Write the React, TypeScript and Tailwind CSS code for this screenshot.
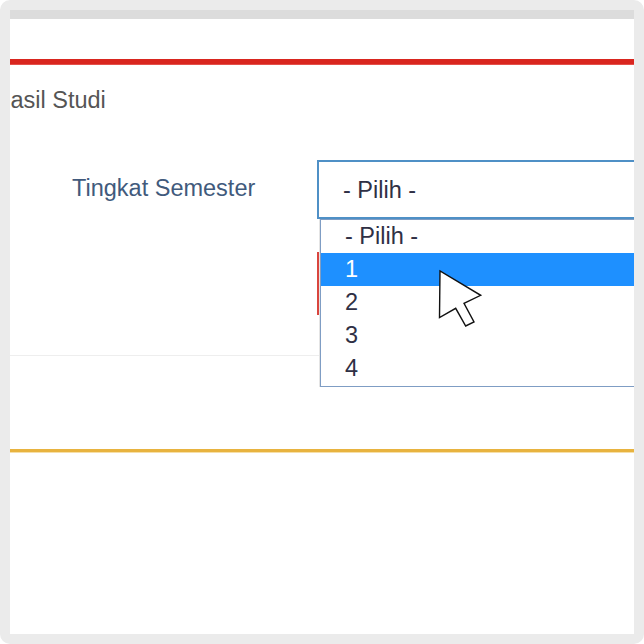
import React from "react";

const options = ["- Pilih -", "1", "2", "3", "4"];

function Cursor() {
  return (
    <svg
      width="48"
      height="62"
      viewBox="-2 -2 48 62"
      className="absolute left-[117px] top-[49px]"
    >
      <polygon
        points="0,0 -0.5,46.5 15.7,37.3 25.7,55 34,51 24,32.3 40.7,24.3"
        fill="#ffffff"
        stroke="#111111"
        strokeWidth="1.4"
        strokeLinejoin="miter"
      />
    </svg>
  );
}

export default function App() {
  return (
    <div className="w-[644px] h-[644px] bg-white font-['Liberation_Sans',Arial,sans-serif]">
      <div className="w-full h-full rounded-[10px] bg-[#ebebeb] p-[10px]">
        <div className="w-full h-full bg-white flex flex-col overflow-hidden">
          {/* top strip */}
          <div className="h-[9px] bg-[#dcdcdc] shrink-0" />
          <div className="h-[40px] shrink-0" />
          <div className="h-[6px] bg-[#d9261f] shrink-0 border-b border-[#e4504a]" />

          {/* title, scrolled so its first letter is cut */}
          <div className="mt-[21px] h-[28px] leading-[28px] text-[23.5px] text-[#555555] whitespace-nowrap">
            <span className="ml-[-16.5px]">Hasil Studi</span>
          </div>

          {/* form row */}
          <div className="mt-[46px] flex items-start">
            <div className="w-[307px] shrink-0 pl-[62px] mt-[14px] leading-[28px] text-[23.5px] text-[#415a7c] whitespace-nowrap">
              Tingkat Semester
            </div>
            <div className="w-[360px] shrink-0">
              <div className="relative z-10">
                <div className="h-[59px] border-2 border-[#4f90c6] flex items-center pl-[24px] text-[23.5px] leading-[28px] text-[#2f3045]">
                  - Pilih -
                </div>

                {/* open dropdown list */}
                <div className="absolute top-full left-[3px] w-[360px] bg-white border border-[#7f9dc4] pb-[1px] shadow-[-1px_0_0_#e4e4e4]">
                  {options.map((o) => (
                    <div
                      key={o}
                      className={
                        o === "1"
                          ? "h-[33px] flex items-center pl-[24px] pb-[2px] text-[23.5px] leading-[28px] bg-[#1e90ff] text-white"
                          : "h-[33px] flex items-center pl-[24px] pb-[2px] text-[23.5px] leading-[28px] text-[#2f3045]"
                      }
                    >
                      {o}
                    </div>
                  ))}
                  <Cursor />
                </div>
              </div>
              <div className="mt-[33px] h-[63px] border-2 border-[#d9453e]" />
            </div>
          </div>

          <div className="mt-[40px] border-t border-[#eeeeee] shrink-0" />
          <div className="mt-[93px] h-[3px] bg-[#e8b33f] shrink-0 shadow-[0_1px_0_#f6dfa8]" />
        </div>
      </div>
    </div>
  );
}
